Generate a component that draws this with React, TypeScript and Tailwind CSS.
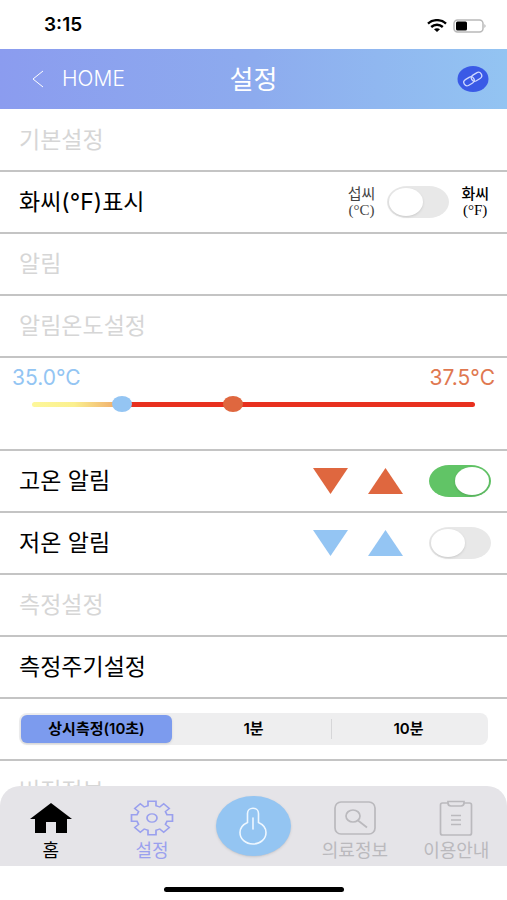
import { useState } from 'react'
import clsx from 'clsx'

const MIN_TEMP = 33.2
const MAX_TEMP = 42.7

const PERIODS = ['상시측정(10초)', '1분', '10분']

// Eight-tooth gear outline around (22, 22)
const GEAR_POINTS = Array.from({ length: 8 }, (_, i) => (i * Math.PI) / 4)
  .flatMap((a) =>
    [[-4, 15], [-4, 20.5], [4, 20.5], [4, 15]].map(([u, r]) => {
      const x = 22 + u * Math.cos(a) + r * Math.sin(a)
      const y = 22 + u * Math.sin(a) - r * Math.cos(a)
      return `${x.toFixed(1)},${y.toFixed(1)}`
    })
  )
  .join(' ')

export default function App() {
  const [fahrenheit, setFahrenheit] = useState(false)
  const [highAlarm, setHighAlarm] = useState(true)
  const [lowAlarm, setLowAlarm] = useState(false)
  const [low, setLow] = useState(35)
  const [high, setHigh] = useState(37.5)
  const [period, setPeriod] = useState(0)

  const changeLow = (value: number) => setLow(Math.max(MIN_TEMP, Math.min(value, high)))
  const changeHigh = (value: number) => setHigh(Math.min(MAX_TEMP, Math.max(value, low)))

  return (
    <div className="flex h-screen flex-col overflow-hidden bg-white font-['Inter','Noto_Sans_CJK_KR',sans-serif] text-black">
      <StatusBar />

      {/* Header */}
      <header className="grid h-15 shrink-0 grid-cols-[1fr_auto_1fr] items-center bg-linear-to-r from-[#8b9cef] via-[#8dabee] to-[#93c4f2] px-[18px] text-white">
        <a href="#home" className="flex items-center gap-[18px] pl-3.5 text-[21px] font-light">
          <svg viewBox="0 0 12 18" className="h-[18px] w-3" fill="none" stroke="currentColor" strokeWidth="1">
            <path d="M11 1 L1 9 L11 17" />
          </svg>
          <span>HOME</span>
        </a>
        <h1 className="text-[26px]">설정</h1>
        <button type="button" aria-label="연결" className="justify-self-end">
          <LinkIcon />
        </button>
      </header>

      {/* Settings */}
      <main className="min-h-0 flex-1 overflow-y-auto pt-px [scrollbar-width:none]">
        <SectionTitle>기본설정</SectionTitle>
        <Row label="화씨(°F)표시">
          <div className="flex items-center gap-3 pr-0.5">
            <UnitLabel name="섭씨" unit="(°C)" />
            <Toggle label="화씨(°F)표시" checked={fahrenheit} onChange={setFahrenheit} />
            <UnitLabel name="화씨" unit="(°F)" bold />
          </div>
        </Row>
        <SectionTitle>알림</SectionTitle>
        <SectionTitle>알림온도설정</SectionTitle>

        <div className="h-[93px] border-b-2 border-[#c4c4c4] pt-0.5">
          <div className="flex justify-between px-3 text-[21px] leading-9">
            <span className="text-[#93c5f3]">{low.toFixed(1)}°C</span>
            <span className="text-[#e07850]">{high.toFixed(1)}°C</span>
          </div>
          <TemperatureRange low={low} high={high} onLow={changeLow} onHigh={changeHigh} />
        </div>

        <Row label="고온 알림">
          <div className="flex items-center text-[#df673f]">
            <Steppers name="고온" onStep={(d) => changeHigh(high + d)} />
            <Toggle label="고온 알림" checked={highAlarm} onChange={setHighAlarm} />
          </div>
        </Row>
        <Row label="저온 알림">
          <div className="flex items-center text-[#94c5f3]">
            <Steppers name="저온" onStep={(d) => changeLow(low + d)} />
            <Toggle label="저온 알림" checked={lowAlarm} onChange={setLowAlarm} />
          </div>
        </Row>
        <SectionTitle>측정설정</SectionTitle>
        <Row label="측정주기설정" />

        <div className="flex h-[62px] items-center border-b-2 border-[#c4c4c4] px-[19px]">
          <div className="grid h-8 flex-1 grid-cols-3 rounded-lg bg-[#eeeeef] p-0.5">
            {PERIODS.map((name, i) => (
              <label
                key={name}
                className={clsx(
                  'relative flex items-center justify-center rounded-md text-[15px] font-semibold',
                  i === period && 'mr-1 bg-[#7c9bee] shadow-sm'
                )}
              >
                <input
                  type="radio"
                  name="period"
                  className="sr-only"
                  checked={i === period}
                  onChange={() => setPeriod(i)}
                />
                {name}
                {i > period && i > 1 && <span className="absolute left-0 h-5 w-px bg-[#d6d6d8]" />}
              </label>
            ))}
          </div>
        </div>
        <SectionTitle>버전정보</SectionTitle>
      </main>

      {/* Tab bar */}
      <nav className="grid h-20 shrink-0 grid-cols-5 rounded-t-[20px] bg-[#e5e4e8]">
        <Tab label="홈" className="text-black">
          <svg viewBox="0 0 42 30" className="h-[30px] w-[42px]" fill="currentColor">
            <path d="M21 0 L42 16 H37 V30 H26 V19 H16 V30 H5 V16 H0 Z" />
          </svg>
        </Tab>
        <Tab label="설정" className="text-[#9aa0ee]">
          <svg viewBox="0 0 44 44" preserveAspectRatio="none" className="h-9 w-11" fill="none" stroke="currentColor" strokeWidth="1.7">
            <polygon points={GEAR_POINTS} />
            <circle cx="22" cy="22" r="5" />
          </svg>
        </Tab>
        <a href="#measure" aria-label="체온 측정" className="flex items-center justify-center">
          <span className="flex h-15 w-[75px] items-center justify-center rounded-[50%] bg-[#94c5f2] shadow-sm">
            <svg viewBox="0 0 30 38" className="h-[38px] w-[30px]" fill="none" stroke="#eef7ff" strokeWidth="1.6" strokeLinecap="round">
              <path d="M9.500 15.500 V6.500 C9.500 -0.500 20.500 -0.500 20.500 6.500 V15.500 C25 17.500 28 21 28 25.500 C28 32 22.500 37 15 37 C7.500 37 2 32 2 25.500 C2 21 5 17.500 9.500 15.500 Z" />
              <path d="M15 11 V22" />
            </svg>
          </span>
        </a>
        <Tab label="의료정보" className="text-[#bab9bd]">
          <svg viewBox="0 0 42 34" className="h-[34px] w-[42px]" fill="none" stroke="currentColor" strokeWidth="1.7">
            <rect x="1" y="1" width="40" height="32" rx="6" />
            <ellipse cx="19" cy="15" rx="7" ry="6" />
            <path d="M24 19.500 L33 26.500" />
          </svg>
        </Tab>
        <Tab label="이용안내" className="text-[#bab9bd]">
          <svg viewBox="0 0 34 36" className="h-9 w-[34px]" fill="none" stroke="currentColor" strokeWidth="1.7">
            <path d="M9 3 H3.500 Q1.500 3 1.500 5 V33 Q1.500 35 3.500 35 H30.500 Q32.500 35 32.500 33 V5 Q32.500 3 30.500 3 H25" />
            <path d="M9 1.500 H25 V3 Q25 6 22 6 H12 Q9 6 9 3 Z" />
            <path d="M12 15.500 H22 M12 20 H22 M12 24.500 H22" />
          </svg>
        </Tab>
      </nav>

      <div className="flex h-[34px] shrink-0 items-center justify-center pt-3">
        <div className="h-[5px] w-45 rounded-full bg-black" />
      </div>
    </div>
  )
}

function StatusBar() {
  return (
    <div className="flex h-[49px] shrink-0 items-center justify-between pt-0.5 pr-5 pl-11">
      <span className="text-[19px] font-semibold">3:15</span>
      <div className="flex items-center gap-1.5">
        <svg viewBox="0 0 20 13" className="h-[13px] w-5" fill="none" stroke="black" strokeWidth="2.4">
          <path d="M1 4.600 C6 0 14 0 19 4.600" />
          <path d="M4.200 8 C7.500 5 12.500 5 15.800 8" />
          <path d="M10 13 L7 10.300 C8.700 8.900 11.300 8.900 13 10.300 Z" fill="black" stroke="none" />
        </svg>
        <svg viewBox="0 0 34 14" className="h-3.5 w-[34px]">
          <rect x="1" y="1" width="29" height="12" rx="3.500" fill="white" stroke="#b9b9b9" strokeWidth="1.500" />
          <rect x="3" y="2.500" width="11" height="9" rx="1.500" fill="black" />
          <path d="M31.500 5 Q33.500 7 31.500 9 Z" fill="#a0a0a0" />
        </svg>
      </div>
    </div>
  )
}

function LinkIcon() {
  return (
    <svg viewBox="0 0 32 26" className="h-[26px] w-8" fill="none" stroke="#cfd9ff" strokeWidth="1.3">
      <ellipse cx="16" cy="13" rx="15.500" ry="13" fill="#3a5ae6" stroke="none" />
      <rect x="6.500" y="12" width="11" height="6.600" rx="3.300" transform="rotate(-32 12 15.300)" />
      <rect x="14" y="7.500" width="11" height="6.600" rx="3.300" transform="rotate(-32 19.500 10.800)" />
    </svg>
  )
}

function SectionTitle({ children }: { children: React.ReactNode }) {
  return (
    <h2 className="flex h-[62px] items-center border-b-2 border-[#c4c4c4] px-[19px] text-[23px] text-[#d6d6d6]">
      {children}
    </h2>
  )
}

function Row({ label, children }: { label: string; children?: React.ReactNode }) {
  return (
    <div className="flex h-[62px] items-center justify-between border-b-2 border-[#c4c4c4] pr-4 pl-[19px]">
      <span className="text-[23px]">{label}</span>
      {children}
    </div>
  )
}

function UnitLabel({ name, unit, bold }: { name: string; unit: string; bold?: boolean }) {
  return (
    <span
      className={clsx(
        "flex flex-col text-center font-['Liberation_Serif','Noto_Sans_CJK_KR',serif] text-[15px] leading-4",
        bold ? 'font-medium text-black' : 'text-[#444]'
      )}
    >
      <span>{name}</span>
      <span>{unit}</span>
    </span>
  )
}

interface ToggleProps {
  label: string
  checked: boolean
  onChange: (checked: boolean) => void
}

function Toggle({ label, checked, onChange }: ToggleProps) {
  return (
    <input
      type="checkbox"
      role="switch"
      aria-label={label}
      checked={checked}
      onChange={(e) => onChange(e.target.checked)}
      className="flex h-8 w-[62px] appearance-none items-center rounded-[20px/16px] bg-[#e8e8e8] px-0.5 before:h-7 before:w-[34px] before:rounded-[50%] before:bg-white before:shadow-sm before:content-[''] checked:justify-end checked:bg-[#61c466]"
    />
  )
}

function Steppers({ name, onStep }: { name: string; onStep: (delta: number) => void }) {
  return (
    <div className="mr-[26px] flex gap-5">
      <button type="button" aria-label={`${name} 내리기`} onClick={() => onStep(-0.1)}>
        <svg viewBox="0 0 35 26" className="h-[26px] w-[35px]" fill="currentColor">
          <path d="M0 0 H35 L17.500 26 Z" />
        </svg>
      </button>
      <button type="button" aria-label={`${name} 올리기`} onClick={() => onStep(0.1)}>
        <svg viewBox="0 0 35 26" className="h-[26px] w-[35px]" fill="currentColor">
          <path d="M0 26 H35 L17.500 0 Z" />
        </svg>
      </button>
    </div>
  )
}

interface TemperatureRangeProps {
  low: number
  high: number
  onLow: (value: number) => void
  onHigh: (value: number) => void
}

function TemperatureRange({ low, high, onLow, onHigh }: TemperatureRangeProps) {
  const stop = ((low - MIN_TEMP) / (MAX_TEMP - MIN_TEMP)) * 100
  const thumb =
    'pointer-events-none absolute inset-x-0 top-0 h-4 w-full appearance-none bg-transparent [&::-webkit-slider-thumb]:pointer-events-auto [&::-webkit-slider-thumb]:h-4 [&::-webkit-slider-thumb]:w-5 [&::-webkit-slider-thumb]:appearance-none [&::-webkit-slider-thumb]:rounded-[50%]'

  return (
    <div className="relative mx-8 flex h-4 items-center">
      <div
        className="h-[5px] w-full rounded-full"
        style={{
          background: `linear-gradient(to right, #fdf79a, #fbf08f ${stop * 0.5}%, #f0ae6c ${stop}%, #e8301f ${stop + 1}%)`,
        }}
      />
      <input
        type="range"
        aria-label="저온 알림 온도"
        min={MIN_TEMP}
        max={MAX_TEMP}
        step={0.1}
        value={low}
        onChange={(e) => onLow(Number(e.target.value))}
        className={clsx(thumb, '[&::-webkit-slider-thumb]:bg-[#94c5f3]')}
      />
      <input
        type="range"
        aria-label="고온 알림 온도"
        min={MIN_TEMP}
        max={MAX_TEMP}
        step={0.1}
        value={high}
        onChange={(e) => onHigh(Number(e.target.value))}
        className={clsx(thumb, '[&::-webkit-slider-thumb]:bg-[#df673f]')}
      />
    </div>
  )
}

interface TabProps {
  label: string
  className: string
  children: React.ReactNode
}

function Tab({ label, className, children }: TabProps) {
  return (
    <a href={`#${label}`} className={clsx('flex flex-col items-center pt-3.5', className)}>
      <span className="flex h-9 items-center">{children}</span>
      <span className="text-lg leading-[30px]">{label}</span>
    </a>
  )
}
